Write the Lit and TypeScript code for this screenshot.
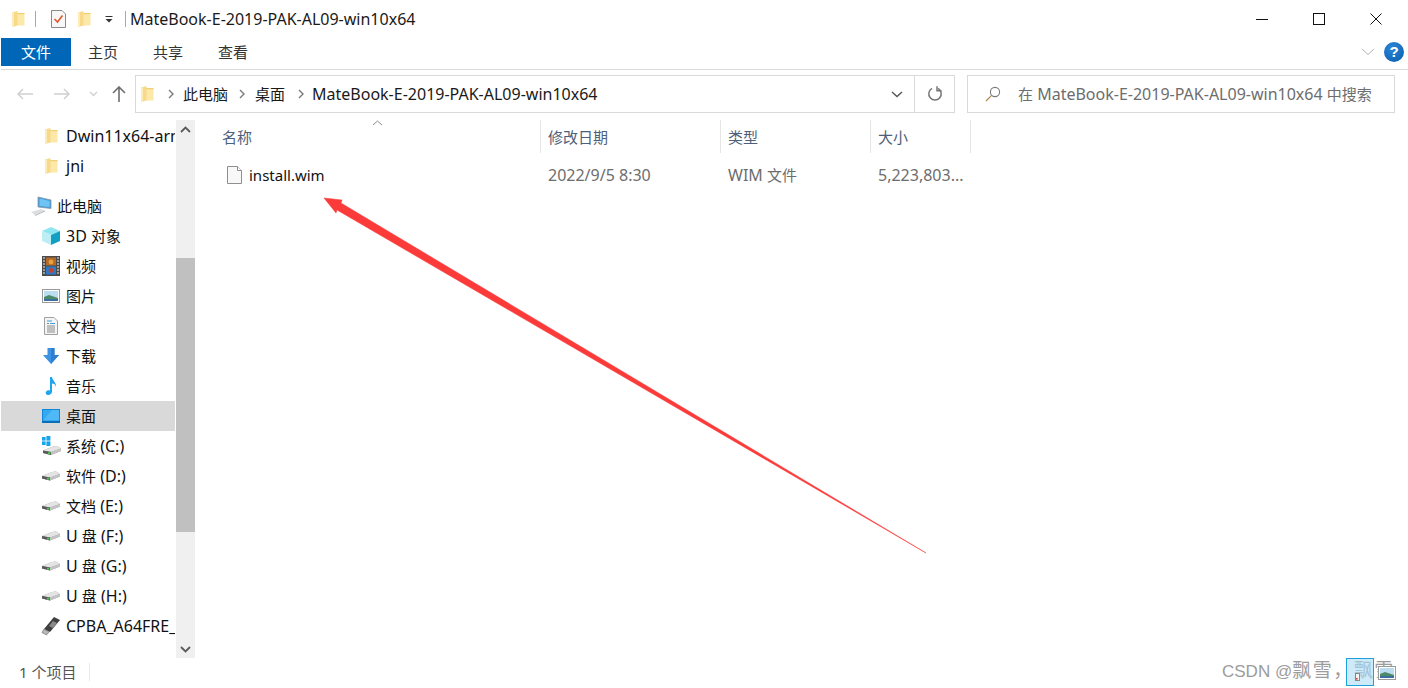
import { LitElement, html, css, svg } from "lit";
import { customElement } from "lit/decorators.js";

const folder = () => html`<svg width="14" height="18" viewBox="0 0 14 18">
  <path d="M6 3 H13.5 V15.5 H6Z" fill="#fce8a8"/>
  <path d="M6 3 H13.5 V4.2 H6Z" fill="#f2cf72"/>
  <path d="M1 2.5 L6.5 1 V15.6 L1 17Z" fill="#f8d98a"/>
  <path d="M1 2.5 L3 2 V16.5 L1 17Z" fill="#fdecb8"/>
</svg>`;

const driveBody = () => svg`
  <path d="M0 5 L10 1 L14 0.5 L18 3 V5.5 L8 9.5 L0 7.5Z" fill="#8e8e8e"/>
  <path d="M0 5 L10 1 L14 0.5 L18 3 L8 6.5Z" fill="#e4e4e4"/>
  <path d="M8 6.5 L18 3 V5.5 L8 9.5Z" fill="#c4c4c4"/>
  <path d="M0 5 L8 6.5 V9.5 L0 7.5Z" fill="#5a5a5a"/>
  <rect x="5" y="6.8" width="2.4" height="1.8" fill="#3fd04a"/>`;

const drive = () => html`<svg width="18" height="10" viewBox="0 0 18 10">${driveBody()}</svg>`;

const navIcons: Record<string, () => unknown> = {
  folder,
  pc: () => html`<svg width="22" height="20" viewBox="0 0 22 20">
    <path d="M7 1 L20 4 V12.5 L7 11Z" fill="#3f9ade" stroke="#8a97a2" stroke-width=".8"/>
    <path d="M8.5 2.6 L18.6 5 V11 L8.5 10Z" fill="#6fc4f4"/>
    <path d="M0 16 L10 13 L14 14.5 L4 19Z" fill="#dcdee0"/>
    <path d="M4 19 L14 14.5 V15.5 L4 20Z" fill="#b4b6b8"/>
  </svg>`,
  d3: () => html`<svg width="20" height="20" viewBox="0 0 20 20">
    <path d="M10 1 L19 5 L10 9 L1 5Z" fill="#8fe6f0"/>
    <path d="M1 5 L10 9 V19 L1 15Z" fill="#bdeef4"/>
    <path d="M19 5 L10 9 V19 L19 15Z" fill="#129fc4"/>
  </svg>`,
  film: () => html`<svg width="18" height="20" viewBox="0 0 18 20">
    <rect x="0" y="0" width="18" height="20" fill="#4a4a4a"/>
    <rect x="4" y="1.5" width="10" height="8" fill="#b56a2a"/>
    <rect x="4" y="10.5" width="10" height="8" fill="#2f78c8"/>
    <circle cx="9" cy="6" r="2.4" fill="#e8a43a"/><circle cx="9" cy="14.5" r="2.4" fill="#c0442c"/>
    <path d="M1 2h2M1 5h2M1 8h2M1 11h2M1 14h2M1 17h2M15 2h2M15 5h2M15 8h2M15 11h2M15 14h2M15 17h2" stroke="#eee" stroke-width="1.2"/>
  </svg>`,
  pic: () => html`<svg width="18" height="14" viewBox="0 0 18 14">
    <rect x=".5" y=".5" width="17" height="13" fill="#fff" stroke="#9a9a9a"/>
    <rect x="2" y="2" width="14" height="10" fill="#bcdcf0"/>
    <path d="M2 8 L7 6 L16 9 V12 H2Z" fill="#4d8a6a"/>
    <path d="M2 10 H16 V12 H2Z" fill="#3c6f9f"/>
  </svg>`,
  doc: () => html`<svg width="14" height="18" viewBox="0 0 14 18">
    <path d="M.5 .5 H10 L13.5 4 V17.5 H.5Z" fill="#f4f4f4" stroke="#a0a0a0"/>
    <path d="M3 4h5M6 6.5h5" stroke="#3b9de0" stroke-width="1.2"/>
    <path d="M3 6.5h2M3 9h8M3 11h8M3 13h8M3 15h8" stroke="#8a8a8a" stroke-width="1"/>
  </svg>`,
  dl: () => html`<svg width="18" height="18" viewBox="0 0 18 18">
    <path d="M5.5 1 H12.5 V8 H17 L9 17 L1 8 H5.5Z" fill="#3e92e4"/>
    <path d="M9 1 H12.5 V8 H17 L9 17Z" fill="#2f7fd0"/>
  </svg>`,
  music: () => html`<svg width="14" height="20" viewBox="0 0 14 20">
    <path d="M6 1 H8 C8.5 5 12.5 6 12 11 C11.5 8.5 9.8 7.5 8 7.5 V15.5 C8 18 5.5 19.5 3.5 19 C1.5 18.5 1 16 3 14.8 C4 14.2 5.2 14.2 6 14.6Z" fill="#1fa5f0"/>
  </svg>`,
  desk: () => html`<svg width="18" height="14" viewBox="0 0 18 14">
    <rect x="0" y="0" width="18" height="14" fill="#0f86d8"/>
    <rect x="1" y="1" width="16" height="10.5" fill="#33a9f2"/>
    <path d="M1 11.5 L10 1 H17 V11.5Z" fill="#4fb8f6"/>
    <rect x="0" y="12" width="18" height="2" fill="#0a6fb8"/>
  </svg>`,
  sys: () => html`<svg width="19" height="20" viewBox="0 0 19 20">
    <g fill="#14a5ee"><rect x="0" y="1" width="3.6" height="3.6"/><rect x="4.4" y="0" width="4" height="4.6"/><rect x="0" y="5.4" width="3.6" height="3.6"/><rect x="4.4" y="5.4" width="4" height="4.6"/></g>
    <g transform="translate(1 9.5)">${driveBody()}</g>
  </svg>`,
  drive,
  usb: () => html`<svg width="20" height="20" viewBox="0 0 20 20">
    <path d="M13 1 L19 4 L9 16 L3 13Z" fill="#3f3f3f"/>
    <path d="M12 5 L16 7 L12 12 L8 10Z" fill="#8a8a8a"/>
    <path d="M3 13 L8 16 L5.5 19 L1 16.5Z" fill="#b8b8b8" stroke="#666" stroke-width=".6"/>
  </svg>`,
};

const navRows = [
  { icon: "folder", label: html`Dwin11x64-arm64` },
  { icon: "folder", label: html`jni` },
  { icon: "pc", label: html`<span class="cj">此电脑</span>`, top: true },
  { icon: "d3", label: html`3D <span class="cj">对象</span>` },
  { icon: "film", label: html`<span class="cj">视频</span>` },
  { icon: "pic", label: html`<span class="cj">图片</span>` },
  { icon: "doc", label: html`<span class="cj">文档</span>` },
  { icon: "dl", label: html`<span class="cj">下载</span>` },
  { icon: "music", label: html`<span class="cj">音乐</span>` },
  { icon: "desk", label: html`<span class="cj">桌面</span>`, sel: true },
  { icon: "sys", label: html`<span class="cj">系统</span> (C:)` },
  { icon: "drive", label: html`<span class="cj">软件</span> (D:)` },
  { icon: "drive", label: html`<span class="cj">文档</span> (E:)` },
  { icon: "drive", label: html`U <span class="cj">盘</span> (F:)` },
  { icon: "drive", label: html`U <span class="cj">盘</span> (G:)` },
  { icon: "drive", label: html`U <span class="cj">盘</span> (H:)` },
  { icon: "usb", label: html`CPBA_A64FRE_ZH-CN` },
];

const chev = (stroke: string, d = "M1 1 L5 5 L9 1", w = 10, h = 6, sw = 1.4) =>
  html`<svg width="${w}" height="${h}" viewBox="0 0 ${w} ${h}"><path d="${d}" fill="none" stroke="${stroke}" stroke-width="${sw}"/></svg>`;
const crumbSep = () => html`<svg width="6" height="10" viewBox="0 0 6 10"><path d="M1 1 L5 5 L1 9" fill="none" stroke="#7a7a7a" stroke-width="1.4"/></svg>`;

@customElement("app-root")
export class AppRoot extends LitElement {
  static styles = css`
    :host {
      display: flex; flex-direction: column; position: relative;
      width: 1408px; height: 688px; overflow: hidden; background: #fff; color: #000;
      font: 15px/20px "Noto Sans", "Noto Sans CJK SC", sans-serif;
    }
    svg { display: block; flex: none; }
    .lat { font-size: 16px; }
    .cj { font-size: 15px; }
    .title { height: 38px; display: flex; align-items: center; flex: none; }
    .title .f1 { margin-left: 11px; }
    .vsep { width: 1px; height: 16px; background: #a8a8a8; }
    .title .s1 { margin-left: 10px; }
    .title .chk { margin-left: 15px; }
    .title .f2 { margin-left: 11px; }
    .title .dd { margin-left: 14px; }
    .title .s2 { margin-left: 12px; }
    .title .t { margin-left: 4px; white-space: nowrap; flex: 1; color: #1a1a1a; }
    .win { display: flex; align-self: stretch; align-items: center; margin-right: 26px; gap: 45px; }
    .tabs { height: 28px; display: flex; align-items: center; flex: none; padding-left: 1px; }
    .tab { color: #333; }
    .tab.file { width: 70px; height: 28px; background: #0067b8; color: #fff; display: flex; align-items: center; justify-content: center; }
    .tab.home { margin-left: 17px; }
    .tab.share { margin-left: 35px; }
    .tab.view { margin-left: 35px; flex: 1; }
    .help { display: flex; align-items: center; gap: 9px; margin-right: 4px; }
    .circle { width: 20px; height: 20px; border-radius: 50%; background: radial-gradient(circle at 40% 30%, #2a86d8, #0b5cab); color: #fff; display: flex; align-items: center; justify-content: center; font: bold 15px/20px "Liberation Sans", sans-serif; }
    .rule { height: 1px; background: #d9d9d9; margin-top: 3px; flex: none; margin-left: 1px; }
    .addr { height: 38px; margin-top: 5px; display: flex; align-items: center; flex: none; padding-right: 13px; }
    .back { margin-left: 17px; }
    .fwd { margin-left: 21px; }
    .hist { margin-left: 19px; }
    .up { margin-left: 14px; }
    .box { height: 38px; box-sizing: border-box; border: 1px solid #d9d9d9; display: flex; align-items: center; }
    .path { margin-left: 9px; width: 820px; flex: none; }
    .path .pf { margin-left: 4px; }
    .cr { flex: none; white-space: nowrap; color: #1a1a1a; }
    .path .sep1 { margin-left: 14px; }
    .path .c1 { margin-left: 9px; }
    .path .sep2 { margin-left: 11px; }
    .path .c2 { margin-left: 10px; }
    .path .sep3 { margin-left: 13px; }
    .path .c3 { margin-left: 8px; flex: 1; }
    .path .ddb { margin-right: 11px; }
    .path .ref { width: 39px; height: 36px; border-left: 1px solid #d9d9d9; display: flex; align-items: center; justify-content: center; }
    .search { margin-left: 12px; flex: 1; color: #6d6d6d; }
    .search svg { margin-left: 17px; }
    .search span.lat { margin-left: 17px; white-space: nowrap; }
    .body { flex: 1; display: flex; min-height: 0; margin-top: 7px; }
    nav { width: 175px; padding: 1px 0 0 1px; box-sizing: border-box; overflow: hidden; flex: none; }
    .nr { height: 30px; display: flex; align-items: center; white-space: nowrap; overflow: hidden; color: #111; padding-left: 29px; }
    .nr.top { margin-top: 10px; padding-left: 29px; }
    .nr.sel { background: #d9d9d9; }
    .ic { width: 22px; flex: none; display: flex; align-items: center; justify-content: center; margin-left: 10px; }
    .nr.top .ic { margin-left: 1px; margin-right: 4px; }
    .nt { margin-left: 4px; }
    .nr.top .nt { margin-left: 0; }
    .sb { width: 19px; margin: 0 1px 0 1px; background: #f0f0f0; flex: none; display: flex; flex-direction: column; }
    .sb .ar { height: 18px; display: flex; align-items: center; justify-content: center; flex: none; }
    .sb .tr1 { height: 120px; flex: none; }
    .sb .th { height: 274px; background: #c0c0c0; flex: none; }
    .sb .tr2 { flex: 1; }
    main { flex: 1; min-width: 0; }
    .hdr, .row { display: grid; grid-template-columns: 345px 180px 150px 100px; }
    .hdr { height: 33px; color: #4c607a; }
    .hc { border-right: 1px solid #e5e5e5; display: flex; align-items: center; padding-left: 7px; box-sizing: border-box; height: 33px; position: relative; }
    .hc.first { padding-left: 26px; }
    .sort { position: absolute; left: 176px; top: 0; }
    .row { height: 30px; margin-top: 7px; color: #6d6d6d; align-items: center; }
    .cell { padding-left: 7px; white-space: nowrap; }
    .row .name { display: flex; align-items: center; padding-left: 31px; color: #111; }
    .row .name span { margin-left: 7px; font-size: 15px; }
    .status { height: 30px; box-sizing: border-box; padding: 0 0 2px 19px; display: flex; align-items: center; flex: none; color: #555; }
    .status .vs { width: 1px; height: 18px; background: #e8e8e8; margin-left: 13px; }
    .arrow { position: absolute; left: 0; top: 0; pointer-events: none; }
    .wm { position: absolute; left: 1222px; top: 659px; color: #9c9c9c; font: 17px/24px "Liberation Sans", "Noto Sans CJK SC", sans-serif; white-space: nowrap; }
    .wm span { font-size: 19px; letter-spacing: 1.5px; }
    .tile { position: absolute; left: 1346px; top: 658px; width: 26px; height: 26px; border: 1px solid #1ea0dc; background: rgba(170, 220, 245, .6); }
    .tile svg { margin: 14px 0 0 8px; }
    .tray { position: absolute; left: 1378px; top: 666px; }
  `;

  render() {
    return html`
      <div class="title">
        <span class="f1">${folder()}</span>
        <span class="vsep s1"></span>
        <span class="chk"><svg width="15" height="18" viewBox="0 0 15 18">
          <path d="M.5 .5 H11 L14.5 4 V17.5 H.5Z" fill="#f7f7f7" stroke="#8a8a8a"/>
          <path d="M3.5 9 L6.5 12 L11.5 5.5" fill="none" stroke="#e2572b" stroke-width="1.6"/>
        </svg></span>
        <span class="f2">${folder()}</span>
        <span class="dd"><svg width="8" height="7" viewBox="0 0 8 7"><path d="M.5 .5H7.5" stroke="#333"/><path d="M.5 3 H7.5 L4 6.5Z" fill="#333"/></svg></span>
        <span class="vsep s2"></span>
        <span class="t lat">MateBook-E-2019-PAK-AL09-win10x64</span>
        <div class="win">
          <svg width="12" height="1" viewBox="0 0 12 1"><rect width="12" height="1" fill="#111"/></svg>
          <svg width="12" height="12" viewBox="0 0 12 12"><rect x=".5" y=".5" width="11" height="11" fill="none" stroke="#111"/></svg>
          <svg width="12" height="12" viewBox="0 0 12 12"><path d="M.5 .5L11.5 11.5M11.5 .5L.5 11.5" stroke="#111"/></svg>
        </div>
      </div>
      <div class="tabs">
        <span class="tab file">文件</span>
        <span class="tab home">主页</span>
        <span class="tab share">共享</span>
        <span class="tab view">查看</span>
        <span class="help">
          ${chev("#b5b5b5", "M1 1 L7 6.5 L13 1", 14, 8, 1)}
          <span class="circle">?</span>
        </span>
      </div>
      <div class="rule"></div>
      <div class="addr">
        <span class="back"><svg width="16" height="12" viewBox="0 0 16 12"><path d="M6 1 L1 6 L6 11 M1 6 H16" fill="none" stroke="#d0d0d0" stroke-width="1.5"/></svg></span>
        <span class="fwd"><svg width="16" height="12" viewBox="0 0 16 12"><path d="M10 1 L15 6 L10 11 M15 6 H0" fill="none" stroke="#d0d0d0" stroke-width="1.5"/></svg></span>
        <span class="hist">${chev("#d0d0d0", "M1 1 L4.5 4.5 L8 1", 9, 6)}</span>
        <span class="up"><svg width="14" height="16" viewBox="0 0 14 16"><path d="M1 7 L7 1 L13 7 M7 1 V16" fill="none" stroke="#6d6d6d" stroke-width="1.6"/></svg></span>
        <div class="box path">
          <span class="pf">${folder()}</span>
          <span class="sep1">${crumbSep()}</span>
          <span class="cr c1">此电脑</span>
          <span class="sep2">${crumbSep()}</span>
          <span class="cr c2">桌面</span>
          <span class="sep3">${crumbSep()}</span>
          <span class="cr c3 lat">MateBook-E-2019-PAK-AL09-win10x64</span>
          <span class="ddb">${chev("#555", "M1 1 L6 5.5 L11 1", 12, 7)}</span>
          <span class="ref"><svg width="16" height="16" viewBox="0 0 16 16"><path d="M5 2.4 A6.2 6.2 0 1 0 11 2.4" fill="none" stroke="#777" stroke-width="1.5"/><path d="M10 .2 V4.8 H14.6" fill="none" stroke="#777" stroke-width="1.5"/></svg></span>
        </div>
        <div class="box search">
          <svg width="16" height="16" viewBox="0 0 16 16"><circle cx="10" cy="6" r="4.6" fill="none" stroke="#7a7a7a" stroke-width="1.1"/><path d="M6.6 9.4 L1 15" stroke="#b08a5a" stroke-width="1.3"/></svg>
          <span class="lat"><span class="cj">在</span> MateBook-E-2019-PAK-AL09-win10x64 <span class="cj">中搜索</span></span>
        </div>
      </div>
      <div class="body">
        <nav>
          ${navRows.map(
            (r) => html`<div class="nr ${r.top ? "top" : ""} ${r.sel ? "sel" : ""}">
              <span class="ic">${navIcons[r.icon]()}</span>
              <span class="nt lat">${r.label}</span>
            </div>`
          )}
        </nav>
        <div class="sb">
          <span class="ar">${chev("#5a5a5a", "M1 6 L5.5 1.5 L10 6", 11, 7, 1.8)}</span>
          <span class="tr1"></span>
          <span class="th"></span>
          <span class="tr2"></span>
          <span class="ar">${chev("#5a5a5a", "M1 1 L5.5 5.5 L10 1", 11, 7, 1.8)}</span>
        </div>
        <main>
          <div class="hdr">
            <div class="hc first">名称<span class="sort">${chev("#8a8a8a", "M1 5 L5.5 1 L10 5", 11, 6, 1)}</span></div>
            <div class="hc">修改日期</div>
            <div class="hc">类型</div>
            <div class="hc">大小</div>
          </div>
          <div class="row">
            <div class="name"><svg width="15" height="18" viewBox="0 0 15 18"><path d="M.5 .5 H10.5 L14.5 4.5 V17.5 H.5Z" fill="#f8f8f8" stroke="#8f8f8f"/><path d="M10.5 .5 V4.5 H14.5" fill="#fff" stroke="#8f8f8f"/></svg><span>install.wim</span></div>
            <div class="cell lat">2022/9/5 8:30</div>
            <div class="cell lat">WIM <span class="cj">文件</span></div>
            <div class="cell lat">5,223,803...</div>
          </div>
        </main>
      </div>
      <div class="status"><span>1 个项目</span><span class="vs"></span></div>
      <svg class="arrow" width="1408" height="688" viewBox="0 0 1408 688">
        ${svg`<path d="M324 198 L342 200 L341 203 L926 553 L337 210 L336 213Z" fill="#fb3a3a" stroke="#fb3a3a" stroke-width=".5"/>`}
      </svg>
      <div class="wm">CSDN @<span>飘雪，飘雪</span></div>
      <div class="tile"><svg width="5" height="8" viewBox="0 0 5 8"><rect x=".5" y=".5" width="4" height="7" fill="#f4f4f4" stroke="#888"/><rect x="1" y="5" width="1.6" height="1.6" fill="#d8382c"/></svg></div>
      <div class="tray">${navIcons.pic()}</div>
    `;
  }
}
